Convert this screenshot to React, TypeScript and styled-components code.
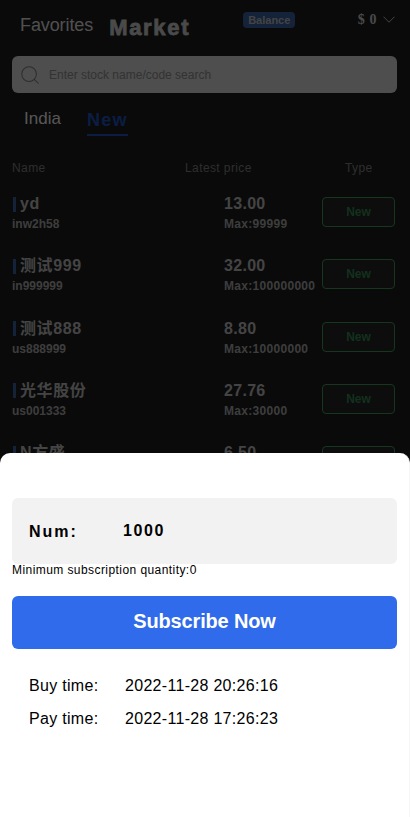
import { Search } from "lucide-react";
import styled, { createGlobalStyle } from "styled-components";

const GlobalStyle = createGlobalStyle`
  html, body {
    margin: 0;
    padding: 0;
    height: 100%;
    overflow: hidden;
    background: #1a1a1a;
  }
  body {
    font-family: "Liberation Sans", Arial, "Noto Sans CJK SC", sans-serif;
  }
`;

const Page = styled.div`
  position: relative;
  width: 410px;
  height: 817px;
  overflow: hidden;
  background: #1a1a1a;
  color: #fff;
`;

const Header = styled.header`
  display: flex;
  align-items: flex-start;
  height: 56px;
  padding: 16px 15px 0 20px;
  box-sizing: border-box;
`;

const FavoritesTab = styled.span`
  font-size: 18px;
  line-height: 20px;
  letter-spacing: -0.1px;
  margin: -1px 16px 0 0;
  color: #c8c8c8;
`;

const MarketTab = styled.span`
  font-size: 22px;
  line-height: 22px;
  font-weight: 700;
  letter-spacing: 1.7px;
  -webkit-text-stroke: 0.8px #b8b8b8;
  color: #b8b8b8;
  margin-top: 1px;
`;

const BalanceBadge = styled.span`
  margin: -4px 0 0 53px;
  width: 52px;
  height: 16px;
  border-radius: 4px;
  background: #34588f;
  color: #aaa;
  font-size: 11px;
  line-height: 16px;
  font-weight: 700;
  text-align: center;
`;

const BalanceValue = styled.span`
  display: flex;
  align-items: center;
  gap: 6px;
  margin: -4px 0 0 auto;
  font-family: "Liberation Serif", serif;
  font-size: 14px;
  line-height: 16px;
  font-weight: 700;
  letter-spacing: 0.6px;
  color: #b8b8b8;
`;

const SearchBar = styled.div`
  display: flex;
  align-items: center;
  gap: 8px;
  height: 37px;
  margin: 0 13px 0 12px;
  padding: 0 7px;
  border-radius: 6px;
  background: #c2c2c2;
  color: #808080;
  font-size: 12px;
`;

const MarketTabs = styled.nav`
  display: flex;
  align-items: flex-start;
  gap: 26px;
  height: 42px;
  margin: 8px 0 0;
  padding: 0 24px;
  box-sizing: border-box;
`;

const RegionTab = styled.span<{ $active?: boolean }>`
  height: 35px;
  box-sizing: border-box;
  padding-top: ${(p) => (p.$active ? "9px" : "8px")};
  font-size: ${(p) => (p.$active ? "18px" : "17px")};
  line-height: 20px;
  font-weight: ${(p) => (p.$active ? 700 : 400)};
  letter-spacing: ${(p) => (p.$active ? "1.3px" : "0")};
  color: ${(p) => (p.$active ? "#1c4aa8" : "#d8d8d8")};
  border-bottom: ${(p) => (p.$active ? "2px solid #1c4aa8" : "none")};
`;

const TableHead = styled.div`
  display: grid;
  grid-template-columns: 173px 160px auto;
  height: 47px;
  margin: 0 0 0 12px;
  padding-top: 18px;
  box-sizing: border-box;
  font-size: 12px;
  line-height: 14px;
  letter-spacing: 0.4px;
  color: #737373;
`;

const Row = styled.div`
  display: flex;
  height: 62.3px;
  padding: 0 15px 0 12px;
  box-sizing: border-box;
`;

const NameCol = styled.div`
  width: 212px;
  padding-top: 4px;
`;

const StockName = styled.div`
  display: flex;
  align-items: center;
  font-size: 16px;
  line-height: 20px;
  font-weight: 700;
  letter-spacing: 0.6px;
  color: #aaa;

  &::before {
    content: "";
    width: 3px;
    height: 15px;
    margin: 0 4px 0 1px;
    background: #34588f;
  }
`;

const StockCode = styled.div`
  margin-top: 3px;
  font-size: 12px;
  line-height: 14px;
  font-weight: 700;
  color: #999;
`;

const PriceCol = styled.div`
  width: 98px;
  padding-top: 4px;
  white-space: nowrap;
`;

const Price = styled.div`
  font-size: 16px;
  line-height: 20px;
  font-weight: 700;
  letter-spacing: 0.3px;
  color: #aaa;
`;

const MaxQty = styled.div`
  margin-top: 3px;
  font-size: 12px;
  line-height: 14px;
  font-weight: 700;
  letter-spacing: 0.3px;
  color: #999;
`;

const TypeButton = styled.button`
  width: 73px;
  height: 30px;
  margin-top: 7px;
  padding: 0;
  border: 1px solid #358a52;
  border-radius: 4px;
  background: rgba(255, 255, 255, 0.03);
  color: #2f7a4a;
  font: 700 12px/28px "Liberation Sans", sans-serif;
`;

const Overlay = styled.div`
  position: absolute;
  inset: 0;
  background: rgba(0, 0, 0, 0.6);
`;

const Sheet = styled.section`
  position: absolute;
  left: 0;
  right: 0;
  bottom: 0;
  height: 364px;
  padding: 45px 12px 0;
  box-sizing: border-box;
  background: #fff;
  border-right: 1px solid #f6f6f6;
  border-radius: 10px 10px 0 0;
  color: #000;
`;

const NumField = styled.div`
  display: flex;
  align-items: center;
  height: 66px;
  padding-left: 17px;
  border-radius: 6px;
  background: #f2f2f2;
  font-size: 16px;
  font-weight: 700;
  letter-spacing: 2px;
`;

const NumLabel = styled.span`
  width: 94px;
  line-height: 20px;
  padding-top: 2px;
`;

const NumValue = styled.span`
  line-height: 20px;
  margin-top: -1px;
  letter-spacing: 1.6px;
`;

const MinHint = styled.div`
  font-size: 12px;
  line-height: 13px;
  letter-spacing: 0.43px;
`;

const SubscribeButton = styled.button`
  display: block;
  width: 100%;
  height: 53px;
  margin-top: 19px;
  padding: 0 0 2px;
  border: 0;
  border-radius: 6px;
  background: #2f6bea;
  color: #fff;
  font: 700 20px/51px "Liberation Sans", sans-serif;
  letter-spacing: -0.15px;
`;

const TimeList = styled.div`
  display: flex;
  flex-direction: column;
  gap: 14px;
  margin-top: 27px;
  padding-left: 17px;
`;

const TimeRow = styled.div`
  display: flex;
  font-size: 16px;
  line-height: 19px;
  letter-spacing: 0.3px;
`;

const TimeLabel = styled.span`
  width: 96px;
`;

const Chevron = () => (
  <svg width="12" height="8" viewBox="0 0 12 8" fill="none" stroke="#aaa" strokeWidth="1">
    <polyline points="0.5,0.7 6,6.2 11.5,0.7" />
  </svg>
);

const rows = [
  { name: "yd", code: "inw2h58", price: "13.00", max: "99999" },
  { name: "测试999", code: "in999999", price: "32.00", max: "100000000" },
  { name: "测试888", code: "us888999", price: "8.80", max: "10000000" },
  { name: "光华股份", code: "us001333", price: "27.76", max: "30000" },
  { name: "N方盛", code: "us603998", price: "6.50", max: "30000" },
];

export default function App() {
  return (
    <>
      <GlobalStyle />
      <Page>
        <Header>
          <FavoritesTab>Favorites</FavoritesTab>
          <MarketTab>Market</MarketTab>
          <BalanceBadge>Balance</BalanceBadge>
          <BalanceValue>
            $ 0 <Chevron />
          </BalanceValue>
        </Header>
        <SearchBar>
          <Search size={22} strokeWidth={1.1} color="#707070" />
          Enter stock name/code search
        </SearchBar>
        <MarketTabs>
          <RegionTab>India</RegionTab>
          <RegionTab $active>New</RegionTab>
        </MarketTabs>
        <TableHead>
          <span>Name</span>
          <span>Latest price</span>
          <span>Type</span>
        </TableHead>
        {rows.map((row) => (
          <Row key={row.code}>
            <NameCol>
              <StockName>{row.name}</StockName>
              <StockCode>{row.code}</StockCode>
            </NameCol>
            <PriceCol>
              <Price>{row.price}</Price>
              <MaxQty>Max:{row.max}</MaxQty>
            </PriceCol>
            <TypeButton>New</TypeButton>
          </Row>
        ))}
        <Overlay />
        <Sheet>
          <NumField>
            <NumLabel>Num:</NumLabel>
            <NumValue>1000</NumValue>
          </NumField>
          <MinHint>Minimum subscription quantity:0</MinHint>
          <SubscribeButton>Subscribe Now</SubscribeButton>
          <TimeList>
            <TimeRow>
              <TimeLabel>Buy time:</TimeLabel>
              2022-11-28 20:26:16
            </TimeRow>
            <TimeRow>
              <TimeLabel>Pay time:</TimeLabel>
              2022-11-28 17:26:23
            </TimeRow>
          </TimeList>
        </Sheet>
      </Page>
    </>
  );
}
